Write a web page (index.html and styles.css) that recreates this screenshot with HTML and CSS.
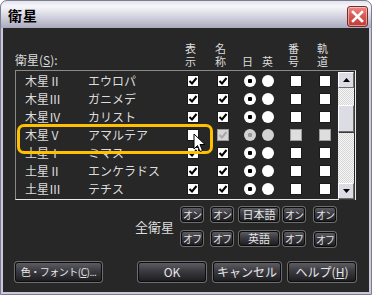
FILE: index.html
```html
<!DOCTYPE html>
<html lang="ja">
<head>
  <meta charset="UTF-8" />
  <title>衛星</title>
  <link rel="stylesheet" href="styles.css">
</head>
<body>
  <div class="window">
    <div class="titlebar">
      <span class="title">衛星</span>
      <div class="close">
        <svg width="13" height="13" viewBox="0 0 13 13"><path d="M2 2 L11 11 M11 2 L2 11" stroke="#fff" stroke-width="2.6" stroke-linecap="square"/></svg>
      </div>
    </div>

    <div class="content">
      <div class="head">
        <div class="head-label">衛星(<u>S</u>):</div>
        <div class="vt"><span>表</span><span>示</span></div>
        <div class="vt"><span>名</span><span>称</span></div>
        <div class="vt"><span>日</span></div>
        <div class="vt"><span>英</span></div>
        <div class="vt"><span>番</span><span>号</span></div>
        <div class="vt"><span>軌</span><span>道</span></div>
      </div>

      <div class="list">
        <div class="rows">
          <div class="row"><span>木星Ⅱ</span><span>エウロパ</span><i class="cb on"></i><i class="cb on"></i><i class="rd dot"></i><i class="rd"></i><i class="sq"></i><i class="sq"></i></div>
          <div class="row"><span>木星Ⅲ</span><span>ガニメデ</span><i class="cb on"></i><i class="cb on"></i><i class="rd dot"></i><i class="rd"></i><i class="sq"></i><i class="sq"></i></div>
          <div class="row"><span>木星Ⅳ</span><span>カリスト</span><i class="cb on"></i><i class="cb on"></i><i class="rd dot"></i><i class="rd"></i><i class="sq"></i><i class="sq"></i></div>
          <div class="row dim"><span>木星Ⅴ</span><span>アマルテア</span><i class="cb"></i><i class="cb on"></i><i class="rd dot"></i><i class="rd"></i><i class="sq"></i><i class="sq"></i></div>
          <div class="row"><span>土星Ⅰ</span><span>ミマス</span><i class="cb on"></i><i class="cb on"></i><i class="rd dot"></i><i class="rd"></i><i class="sq"></i><i class="sq"></i></div>
          <div class="row"><span>土星Ⅱ</span><span>エンケラドス</span><i class="cb on"></i><i class="cb on"></i><i class="rd dot"></i><i class="rd"></i><i class="sq"></i><i class="sq"></i></div>
          <div class="row"><span>土星Ⅲ</span><span>テチス</span><i class="cb on"></i><i class="cb on"></i><i class="rd dot"></i><i class="rd"></i><i class="sq"></i><i class="sq"></i></div>
        </div>
        <div class="scrollbar">
          <div class="sb-btn"><svg width="7" height="4" viewBox="0 0 7 4"><path d="M0 4 L3.5 0 L7 4Z" fill="#000"/></svg></div>
          <div class="sb-track">
            <div class="sb-thumb"></div>
          </div>
          <div class="sb-btn"><svg width="7" height="4" viewBox="0 0 7 4"><path d="M0 0 L7 0 L3.5 4Z" fill="#000"/></svg></div>
        </div>
        <div class="highlight"></div>
        <svg class="cursor" width="13" height="20" viewBox="0 0 13 20">
          <path d="M1 1 L1 16 L4.5 12.5 L7 18.5 L9.5 17.5 L7 11.5 L12 11.5 Z" fill="#fff" stroke="#000" stroke-width="1"/>
        </svg>
      </div>

      <div class="all-row">
        <span class="all-label">全衛星</span>
        <div class="all-grid">
          <button class="btn sm">オン</button>
          <button class="btn sm">オン</button>
          <button class="btn sm wide">日本語</button>
          <button class="btn sm">オン</button>
          <button class="btn sm">オン</button>
          <button class="btn sm">オフ</button>
          <button class="btn sm">オフ</button>
          <button class="btn sm wide">英語</button>
          <button class="btn sm">オフ</button>
          <button class="btn sm low">オフ</button>
        </div>
      </div>

      <div class="footer">
        <button class="btn lg font">色・フォント(<u>C</u>)...</button>
        <div class="footer-right">
          <button class="btn lg">OK</button>
          <button class="btn lg">キャンセル</button>
          <button class="btn lg">ヘルプ(<u>H</u>)</button>
        </div>
      </div>
    </div>
  </div>
</body>
</html>
```

FILE: styles.css
```css
* {
  box-sizing: border-box;
}

body {
  margin: 0;
  background: #fff;
  font-family: "Noto Sans CJK JP", "Liberation Sans", sans-serif;
}

.window {
  width: 372px;
  height: 295px;
  border: 1px solid #7c7c92;
  border-radius: 7px 7px 0 0;
  padding: 0 2px 2px;
  background: linear-gradient(to bottom, #e4e4ec 0, #f6f6fa 20%, #d6d6e2 55%, #a9a9bd 100%) no-repeat 0 0 / 100% 27px, #c9c9d7;
  display: flex;
  flex-direction: column;
}

.titlebar {
  height: 27px;
  display: flex;
  align-items: center;
  justify-content: space-between;
  padding: 0 1px 0 5px;
}

.title {
  font-size: 14px;
  font-weight: bold;
  color: #000;
  letter-spacing: 1px;
}

.close {
  width: 21px;
  height: 21px;
  margin-top: 4px;
  border: 1px solid #7a2a2a;
  border-radius: 3px;
  background: linear-gradient(to bottom, #ec8a84 0, #d85a52 45%, #c03c34 100%);
  box-shadow: inset 0 0 0 1px rgba(255, 255, 255, 0.45);
  display: flex;
  align-items: center;
  justify-content: center;
}

.content {
  flex: 1;
  background: #272727;
  padding: 12px 13px 0 12px;
  color: #dcdcdc;
  font-size: 12px;
  line-height: 12px;
  display: flex;
  flex-direction: column;
}

.head {
  height: 27px;
  display: grid;
  grid-template-columns: 170px 30px 27px 20px 26px 29px 20px;
  align-items: end;
  font-size: 11px;
}

.vt {
  display: flex;
  flex-direction: column;
  gap: 1px;
}

.vt span {
  display: block;
  height: 12px;
  line-height: 12px;
}

.head-label {
  font-size: 12px;
  line-height: 12px;
  padding-bottom: 1px;
}

.head-label u,
.btn u {
  text-decoration: underline;
}

.list {
  position: relative;
  margin-top: 3px;
  height: 130px;
  border: 1px solid;
  border-color: #8a8a8a #ececec #ececec #8a8a8a;
  display: flex;
}

.rows {
  flex: 1;
  padding-top: 1px;
}

.row {
  height: 18px;
  display: grid;
  grid-template-columns: 63px 99px 30px 27px 18px 28px 29px 18px;
  align-items: center;
  padding-left: 9px;
}

.row span {
  white-space: nowrap;
}

.row i {
  display: block;
  width: 12px;
  height: 12px;
  background: #fff;
}

.cb,
.sq {
  box-shadow: inset 0 0 0 1px #1a1a1a;
}

.cb.on {
  background: #fff url("data:image/svg+xml,%3Csvg xmlns='http://www.w3.org/2000/svg' width='12' height='12'%3E%3Cpath d='M2.5 6 L5 8.5 L9.5 3' fill='none' stroke='%23000' stroke-width='2'/%3E%3C/svg%3E") no-repeat;
}

.rd {
  border-radius: 50%;
}

.rd.dot {
  background: radial-gradient(circle, #000 0 2px, #fff 2.5px);
}

.dim .cb.on {
  background: #d6d6d6 url("data:image/svg+xml,%3Csvg xmlns='http://www.w3.org/2000/svg' width='12' height='12'%3E%3Cpath d='M2.5 6 L5 8.5 L9.5 3' fill='none' stroke='%23a8a8a8' stroke-width='2'/%3E%3C/svg%3E") no-repeat;
  box-shadow: inset 0 0 0 1px #9a9a9a;
}

.dim .rd {
  background: #d2d2d2;
}

.dim .rd.dot {
  background: radial-gradient(circle, #9a9a9a 0 2px, #d2d2d2 2.5px);
}

.dim .sq {
  background: #dedede;
  box-shadow: inset 0 0 0 1px #9a9a9a;
}

.scrollbar {
  width: 17px;
  display: flex;
  flex-direction: column;
  padding: 1px 1px 0 0;
}

.sb-btn,
.sb-thumb {
  background: #dcdce4;
  border: 1px solid;
  border-color: #fff #6c6c6c #6c6c6c #fff;
  box-shadow: 1px 1px 0 #3a3a3a;
}

.sb-btn {
  height: 16px;
  display: flex;
  align-items: center;
  justify-content: center;
}

.sb-track {
  flex: 1;
  background: repeating-conic-gradient(#f6f6f6 0 25%, #d6d6d6 0 50%) 0 0 / 2px 2px;
  padding-top: 17px;
}

.sb-thumb {
  height: 27px;
}

.highlight {
  position: absolute;
  left: 1px;
  top: 53px;
  width: 196px;
  height: 30px;
  border: 3px solid #ffc000;
  border-radius: 7px;
}

.cursor {
  position: absolute;
  left: 177px;
  top: 62px;
}

.all-row {
  margin-top: 7px;
  display: flex;
  align-items: center;
}

.all-label {
  width: 166px;
  padding-left: 120px;
  font-size: 13px;
  white-space: nowrap;
}

.all-grid {
  display: grid;
  grid-template-columns: 30px 28px 44px 31px 23px;
  row-gap: 9px;
}

.btn {
  font-family: inherit;
  color: #e6e6e6;
  border: 1px solid #0c0c0c;
  border-radius: 3px;
  background: linear-gradient(to bottom, #5c5c62 0, #3a3a40 45%, #1e1e22 100%);
  box-shadow: 0 0 0 1px #6e6e6e;
  padding: 0;
  white-space: nowrap;
  overflow: hidden;
  cursor: pointer;
}

.btn.sm {
  width: 22px;
  height: 15px;
  font-size: 10px;
  line-height: 13px;
  letter-spacing: -1px;
}

.btn.sm.wide {
  width: 40px;
  font-size: 11px;
  letter-spacing: 0;
}

.btn.sm.low {
  margin-top: 1px;
}

.footer {
  margin-top: 15px;
  display: flex;
  justify-content: space-between;
}

.footer-right {
  display: flex;
  gap: 7px;
}

.btn.lg {
  width: 68px;
  height: 20px;
  font-size: 12px;
  line-height: 18px;
}

.btn.lg.font {
  width: 87px;
  font-size: 10px;
  letter-spacing: -0.5px;
  padding: 0 1px;
}
```
